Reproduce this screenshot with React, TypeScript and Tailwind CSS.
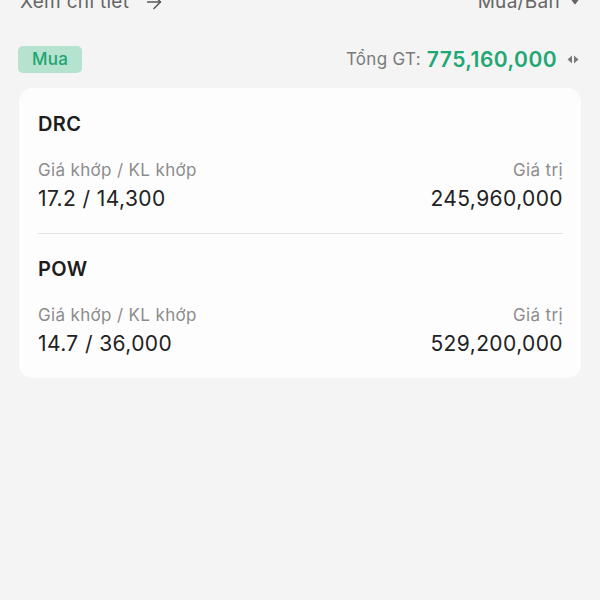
import React from 'react';
import { ArrowRight } from 'lucide-react';

interface Trade {
  symbol: string;
  priceVol: string;
  value: string;
}

const trades: Trade[] = [
  { symbol: 'DRC', priceVol: '17.2 / 14,300', value: '245,960,000' },
  { symbol: 'POW', priceVol: '14.7 / 36,000', value: '529,200,000' },
];

const TradeRow: React.FC<{ trade: Trade }> = ({ trade }) => (
  <div>
    <div className="text-[20px] leading-[24px] font-semibold tracking-[0.4px] text-[#1c1c1c]">{trade.symbol}</div>
    <div className="mt-[23px] flex justify-between text-[17px] leading-[22px] tracking-[0.35px] text-[#8c8c8c]">
      <span>Giá khớp / KL khớp</span>
      <span>Giá trị</span>
    </div>
    <div className="mt-[6px] flex justify-between text-[21px] leading-[24px] tracking-[0.4px] text-[#222]">
      <span>{trade.priceVol}</span>
      <span>{trade.value}</span>
    </div>
  </div>
);

export default function App() {
  return (
    <div
      className="h-[600px] overflow-hidden bg-[#f4f4f4] px-[19px]"
      style={{ fontFamily: 'Inter, "Noto Sans", sans-serif' }}
    >
      <div className="-mt-[12px] flex h-[28px] items-center justify-between text-[19px] tracking-[0.3px] text-[#666]">
        <div className="flex items-center gap-[14px] pl-[1px]">
          <span>Xem chi tiết</span>
          <ArrowRight size={22} strokeWidth={1.6} className="text-[#555]" />
        </div>
        <div className="flex items-center gap-[9px]">
          <span>Mua/Bán</span>
          <svg width="12" height="9" viewBox="0 0 12 9" className="-mt-[4px]">
            <path d="M1.5 1.5 H10.5 L6 7.5 Z" fill="#666" stroke="#666" strokeWidth="1.5" strokeLinejoin="round" />
          </svg>
        </div>
      </div>

      <div className="mt-[30px] flex h-[27px] items-center justify-between">
        <span className="-ml-[1px] flex h-[27px] items-center rounded-[5px] bg-[#b5e3cf] px-[14px] text-[17px] font-medium tracking-[0.3px] text-[#1ea472]">
          Mua
        </span>
        <div className="flex items-center">
          <span className="text-[17px] tracking-[0.3px] text-[#7a7a7a]">Tổng GT:</span>
          <span className="ml-[6px] text-[21px] font-semibold tracking-[0.45px] text-[#1fa873]">775,160,000</span>
          <svg width="12" height="9" viewBox="0 0 12 9" className="ml-[10px] mr-[2px]">
            <path d="M5 0.5 L0.5 4.5 L5 8.5 Z" fill="#7a7a7a" />
            <path d="M7 0.5 L11.5 4.5 L7 8.5 Z" fill="#7a7a7a" />
          </svg>
        </div>
      </div>

      <div className="mt-[15px] rounded-[14px] bg-[#fdfdfd] pl-[19px] pr-[18px] pt-[24px] pb-[22px]">
        <TradeRow trade={trades[0]} />
        <div className="mt-[22px] mb-[23px] h-px bg-[#e4e4e4]" />
        <TradeRow trade={trades[1]} />
      </div>
    </div>
  );
}
